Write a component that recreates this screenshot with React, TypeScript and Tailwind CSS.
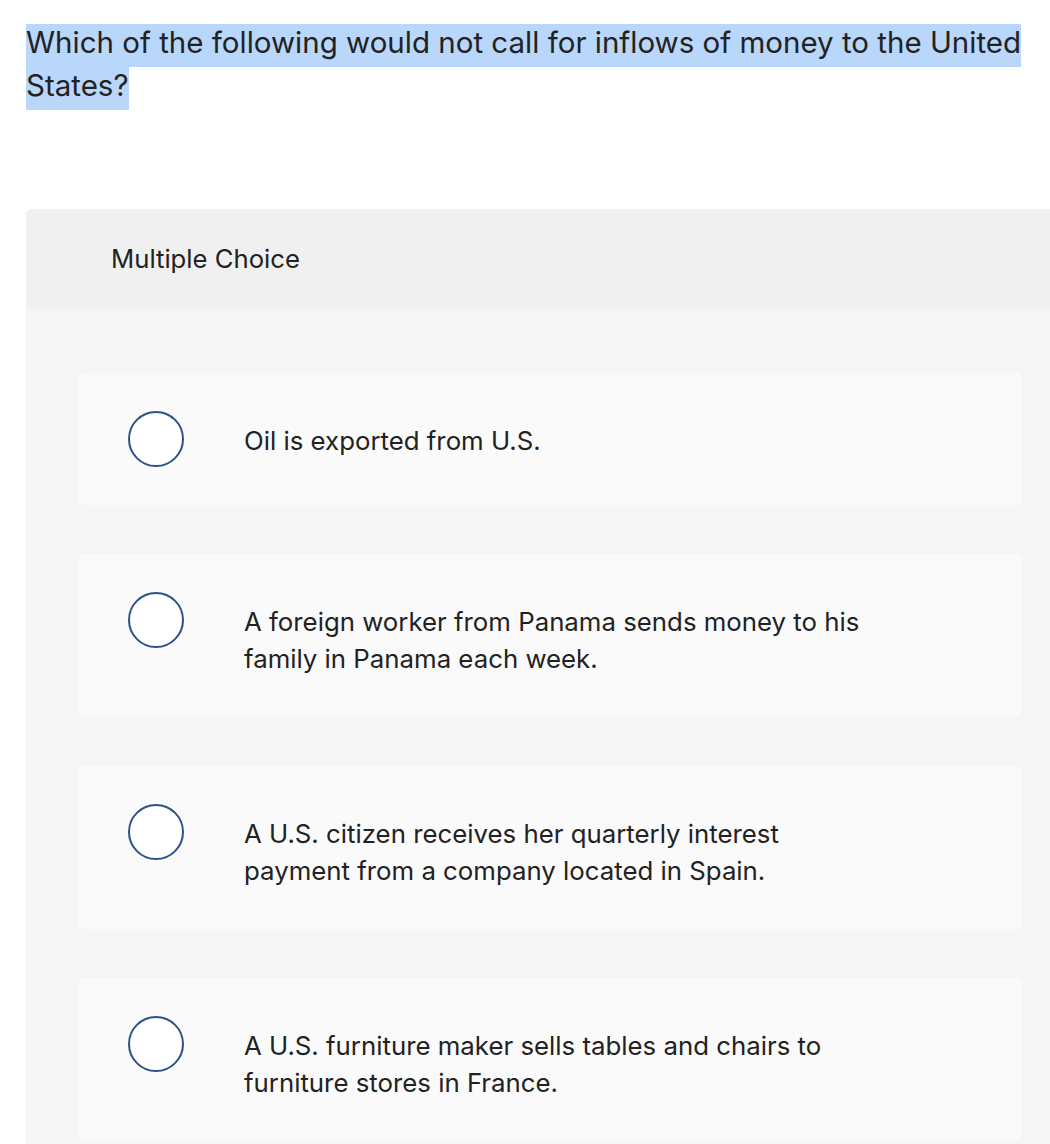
import React from "react";

const choices: string[][] = [
  ["Oil is exported from U.S."],
  ["A foreign worker from Panama sends money to his", "family in Panama each week."],
  ["A U.S. citizen receives her quarterly interest", "payment from a company located in Spain."],
  ["A U.S. furniture maker sells tables and chairs to", "furniture stores in France."],
];

const Choice: React.FC<{ lines: string[] }> = ({ lines }) => {
  return (
    <div className="flex items-start rounded-md bg-[#fafafa] px-[50px] py-[38px]">
      <span className="block h-[56px] w-[56px] shrink-0 rounded-full border-2 border-[#2c5287] bg-white"></span>
      <p className="ml-[60px] mt-[11px] mb-[2px] text-[25.8px] leading-[37px] text-[#222]">
        {lines.map((line, i) => (
          <React.Fragment key={i}>
            {i > 0 && <br />}
            {line}
          </React.Fragment>
        ))}
      </p>
    </div>
  );
};

const App: React.FC = () => {
  return (
    <div className="min-h-[1144px] bg-white pt-[24px] pl-[26px] font-['Inter',sans-serif]">
      <h1 className="text-[29.5px] leading-[37px] text-[#222]">
        <span className="block w-fit bg-[#b9d6fb] pb-[6px]">
          Which of the following would not call for inflows of money to the United
        </span>
        <span className="block w-fit bg-[#b9d6fb] pb-[6px]">States?</span>
      </h1>

      <div className="mt-[99px] rounded-tl-md bg-[#f5f5f5] pb-[40px]">
        <div className="flex h-[100px] items-center rounded-tl-md bg-[#f0f0f0] pl-[85px]">
          <span className="text-[25.7px] text-[#222]">Multiple Choice</span>
        </div>
        <div className="flex flex-col gap-[49px] pt-[64px] pl-[52px] pr-[28px]">
          {choices.map((c, i) => (
            <Choice key={i} lines={c} />
          ))}
        </div>
      </div>
    </div>
  );
};

export default App;
